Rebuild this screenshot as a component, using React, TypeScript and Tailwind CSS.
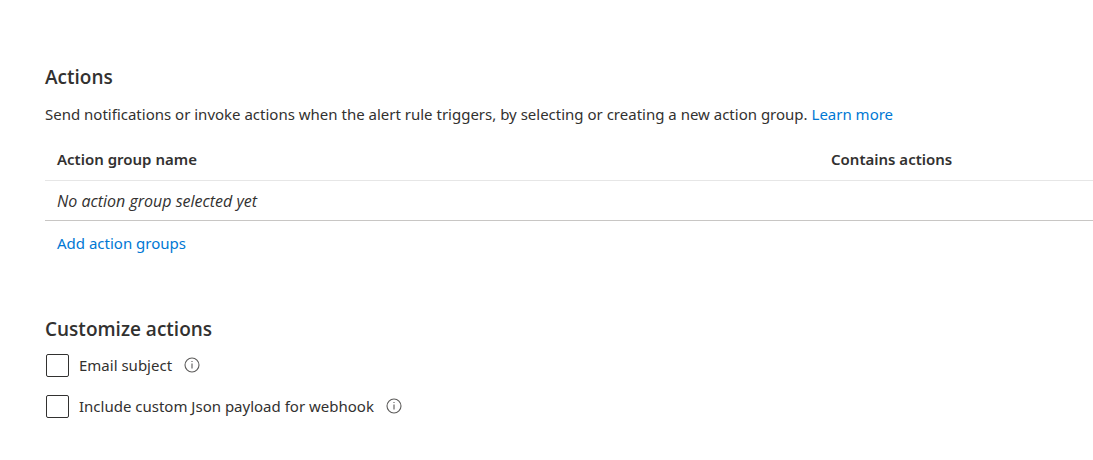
import React from "react";

function InfoIcon() {
  return (
    <svg width="16" height="16" viewBox="0 0 16 16" fill="none" aria-hidden="true">
      <circle cx="8" cy="8" r="7" stroke="#5c5b5a" strokeWidth="1.1" />
      <path d="M8 6.5v5" stroke="#4a4948" strokeWidth="1" />
      <path d="M8 4v1" stroke="#4a4948" strokeWidth="1" />
    </svg>
  );
}

function Option({ id, label }: { id: string; label: string }) {
  return (
    <div className="flex h-6 items-center">
      <input
        id={id}
        type="checkbox"
        className="mt-px ml-px size-[23px] shrink-0 appearance-none rounded-xs border border-[#323130] bg-white checked:bg-[#0078d4]"
      />
      <label htmlFor={id} className="ml-2.5 leading-6">
        {label}
      </label>
      <button type="button" aria-label={"About " + label} className="ml-3">
        <InfoIcon />
      </button>
    </div>
  );
}

export default function App() {
  return (
    <main className="bg-white pt-[65px] pb-10 pl-[45px] font-['Noto_Sans',sans-serif] text-[15px] leading-6 text-[#323130]">
      <section>
        <h2 className="font-['Open_Sans',sans-serif] text-[19px] leading-6 font-semibold">Actions</h2>
        <p className="mt-[13px]">
          Send notifications or invoke actions when the alert rule triggers, by selecting or creating a new action group.{" "}
          <a href="#learn" className="text-[#0078d4]">Learn more</a>
        </p>
        <table className="mt-3 w-full table-fixed border-collapse text-left">
          <thead>
            <tr className="h-[42px] border-b border-[#e6e6e6]">
              <th className="w-3/4 pl-3 font-semibold">Action group name</th>
              <th className="font-semibold">Contains actions</th>
            </tr>
          </thead>
          <tbody>
            <tr className="h-10 border-b border-[#c8c6c4]">
              <td colSpan={2} className="pt-px pl-3 font-['Open_Sans',sans-serif] text-base italic">No action group selected yet</td>
            </tr>
          </tbody>
        </table>
        <a href="#add" className="mt-2.5 ml-3 inline-block text-[#0078d4]">Add action groups</a>
      </section>
      <section className="mt-[62px]">
        <h2 className="font-['Open_Sans',sans-serif] text-[19px] leading-6 font-semibold">Customize actions</h2>
        <div className="mt-3 flex flex-col gap-[17px]">
          <Option id="email-subject" label="Email subject" />
          <Option id="json-payload" label="Include custom Json payload for webhook" />
        </div>
      </section>
    </main>
  );
}
